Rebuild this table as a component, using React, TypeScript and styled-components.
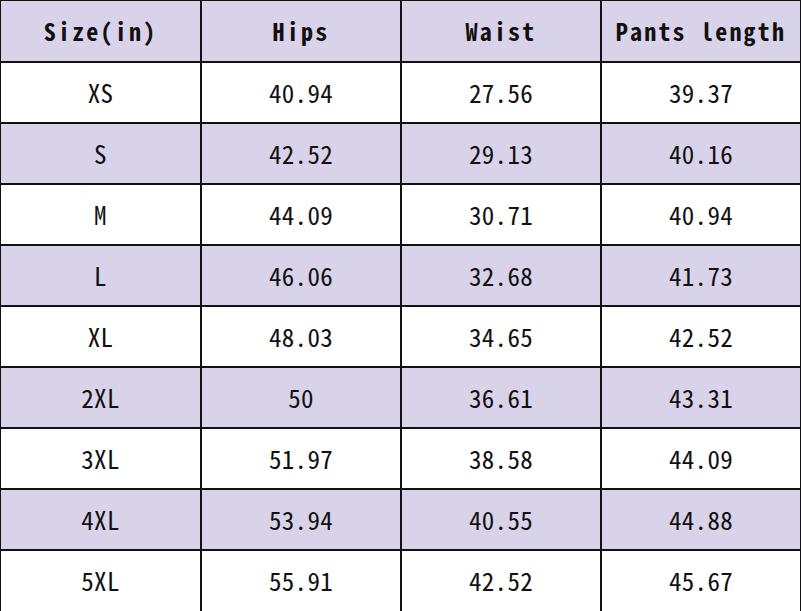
import styled, { createGlobalStyle } from 'styled-components';

const GlobalStyle = createGlobalStyle`
  html, body {
    margin: 0;
    padding: 0;
    background: #ffffff;
  }
`;

const Table = styled.div`
  width: 801px;
  height: 611px;
  display: grid;
  grid-template-columns: 201px 200px 200px 200px;
  grid-template-rows: 62px repeat(8, 61px) 62px;
  box-sizing: border-box;
  border-left: 1px solid #111;
  border-top: 1px solid #111;
  font-family: "Noto Sans Mono CJK SC", "Liberation Mono", monospace;
  color: #111;
`;

const Cell = styled.div<{ $shaded?: boolean; $head?: boolean }>`
  display: flex;
  align-items: center;
  justify-content: center;
  box-sizing: border-box;
  padding-bottom: 2px;
  border-right: 2px solid #111;
  border-bottom: 2px solid #111;
  background: ${({ $shaded }) => ($shaded ? '#d9d3e9' : '#ffffff')};
  font-size: ${({ $head }) => ($head ? '24px' : '25px')};
  font-weight: ${({ $head }) => ($head ? 700 : 400)};
  letter-spacing: ${({ $head }) => ($head ? '2.2px' : '0.3px')};
  white-space: pre;
`;

const headers = ['Size(in)', 'Hips', 'Waist', 'Pants length'];

const rows = [
  ['XS', '40.94', '27.56', '39.37'],
  ['S', '42.52', '29.13', '40.16'],
  ['M', '44.09', '30.71', '40.94'],
  ['L', '46.06', '32.68', '41.73'],
  ['XL', '48.03', '34.65', '42.52'],
  ['2XL', '50', '36.61', '43.31'],
  ['3XL', '51.97', '38.58', '44.09'],
  ['4XL', '53.94', '40.55', '44.88'],
  ['5XL', '55.91', '42.52', '45.67'],
];

const App = () => {
  return (
    <>
      <GlobalStyle />
      <Table>
        {headers.map((h) => (
          <Cell key={h} $head $shaded>
            {h}
          </Cell>
        ))}
        {rows.map((row, i) =>
          row.map((v, j) => (
            <Cell key={`${i}-${j}`} $shaded={i % 2 === 1}>
              {v}
            </Cell>
          ))
        )}
      </Table>
    </>
  );
};

export default App;
